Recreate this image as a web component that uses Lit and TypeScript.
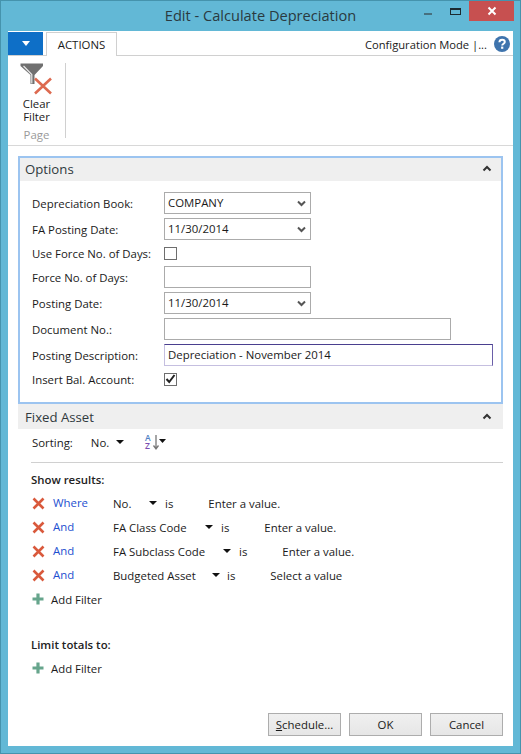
import { LitElement, html, css } from "lit";
import { customElement } from "lit/decorators.js";

const chevron = html`<svg class="chev" width="9" height="7" viewBox="0 0 9 7"><path d="M1 1.5 4.5 5 8 1.5" fill="none" stroke="#555" stroke-width="2"/></svg>`;
const up = html`<svg width="10" height="7" viewBox="0 0 10 7"><path d="M1.5 5.5 5 2 8.5 5.5" fill="none" stroke="#333" stroke-width="2"/></svg>`;
const tri = html`<span class="tri"></span>`;
const cross = html`<svg class="x" width="13" height="13" viewBox="0 0 13 13"><path d="M1.5 1.5 11.5 11.5M11.5 1.5 1.5 11.5" stroke="#D9593C" stroke-width="2.6"/></svg>`;
const plus = html`<svg class="plus" width="12" height="12" viewBox="0 0 12 12"><path d="M6 .5V11.5M.5 6H11.5" stroke="#66A58C" stroke-width="3.2"/></svg>`;

@customElement("app-root")
export class AppRoot extends LitElement {
  static styles = css`
    :host { display: block; width: 521px; height: 754px; font-family: "Open Sans", "Noto Sans", sans-serif; font-size: 11.4px; color: #1a1a1a; }
    * { box-sizing: border-box; }
    .win { width: 521px; height: 754px; background: #62b8d6; border: 1px solid #4593ad; display: flex; flex-direction: column; padding: 0 7px 7px 7px; }
    .titlebar { height: 30px; flex: none; position: relative; display: flex; align-items: center; justify-content: center; font-size: 14.6px; color: #2a3a40; padding-bottom: 3px; }
    .wc { position: absolute; top: 0; right: -1px; display: flex; align-items: flex-start; }
    .min { width: 8px; height: 2px; background: #47707f; margin: 12px 18px 0 0; }
    .max { width: 11px; height: 7px; border: 1px solid #1c2a30; border-top-width: 2px; margin: 7px 8px 0 0; }
    .close { width: 45px; height: 20px; background: #c75050; display: flex; align-items: center; justify-content: center; }
    .client { flex: 1; background: #fff; display: flex; flex-direction: column; min-height: 0; }
    .tabs { height: 25px; flex: none; display: flex; align-items: stretch; border-bottom: 1px solid #d0d0d0; padding-top: 1px; }
    .file { width: 35px; height: 23px; background: #0e6fc7; display: flex; align-items: center; justify-content: center; }
    .file i { border: 4px solid transparent; border-top: 5px solid #fff; border-bottom: 0; width: 0; height: 0; display: block; }
    .tab { width: 71px; margin-left: 3px; border: 1px solid #d0d0d0; border-bottom: 0; background: #fff; height: 24px; display: flex; align-items: center; justify-content: center; font-size: 11.4px; }
    .cfg { margin-left: auto; display: flex; align-items: center; gap: 7px; padding: 1px 3px 0 0; font-size: 11.2px; }
    .ribbon { height: 90px; flex: none; border-bottom: 1px solid #d8d8d8; padding: 7px 0 0 1px; display: flex; }
    .group { width: 57px; height: 75px; border-right: 1px solid #d0d0d0; display: flex; flex-direction: column; align-items: center; padding-right: 1px; }
    .group svg { flex: none; }
    .big { line-height: 13px; text-align: center; margin-top: 2px; width: 56px; }
    .pg { color: #9a9a9a; margin-top: 4px; line-height: 16px; }
    .body { flex: 1; padding: 10px 10px 0 10px; display: flex; flex-direction: column; min-height: 0; }
    .opts { height: 248px; border: 2px solid #9cc4f0; flex: none; width: 485px; }
    .sechead { height: 23px; background: #efefef; display: flex; align-items: center; justify-content: space-between; padding: 0 9px 2px 5px; font-size: 13.2px; color: #30393d; }
    .form { padding: 11px 0 0 12px; display: grid; grid-template-columns: 132px 1fr; row-gap: 4px; align-items: center; }
    .field { height: 22px; border: 1px solid #ababab; width: 147px; display: flex; align-items: center; justify-content: space-between; padding: 0 3px 2px 3px; }
    .field .chev { margin-top: 2px; margin-right: 1px; }
    .w287 { width: 287px; }
    .w329 { width: 329px; border: 1px solid #c5bfe0; border-top-color: #4a3f8f; border-right-color: #6a5fa8; }
    .ck { width: 13px; height: 13px; border: 1px solid #6e6e6e; display: flex; align-items: center; justify-content: center; }
    .ckrow { height: 18px; display: flex; align-items: center; }
    .fa { width: 485px; flex: 1; display: flex; flex-direction: column; }
    .fa .sechead { height: 25px; padding: 0 11px 0 7px; }
    .sort { display: flex; align-items: center; height: 33px; padding: 0 0 7px 14px; }
    .sort .no { margin-left: 18px; display: flex; align-items: center; gap: 7px; }
    .sort svg { margin-left: 21px; overflow: visible; }
    .hr { height: 1px; background: #d0d0d0; margin-left: 13px; }
    .bold { font-weight: 600; padding-left: 13px; line-height: 16px; color: #222; }
    .results { margin-top: 9px; margin-bottom: 3px; }
    .flt { height: 24px; display: flex; align-items: center; padding-left: 14px; position: relative; }
    .flt .x { flex: none; }
    .flt a { color: #1d4fd0; width: 60px; margin-left: 8px; margin-top: -2px; flex: none; }
    .flt .name { display: flex; align-items: center; flex: none; }
    .tri { display: inline-block; width: 0; height: 0; border: 4px solid transparent; border-top: 4px solid #111; border-bottom: 0; }
    .add { height: 24px; display: flex; align-items: center; gap: 7px; padding-left: 14px; }
    .limit { margin-top: 26px; }
    .add2 { margin-top: 3px; }
    .foot { margin-top: auto; display: flex; justify-content: flex-end; gap: 8px; padding: 0 0 10px 0; }
    .btn { width: 73px; height: 23px; border: 1px solid #adadad; background: linear-gradient(#f0f0f0, #e6e6e6); display: flex; align-items: center; justify-content: center; font-size: 11.4px; }
    u { text-decoration: underline; }
    .az { font-family: "Open Sans", sans-serif; font-size: 8.5px; font-weight: 600; }
  `;

  private row(label: string, ctl: unknown) {
    return html`<div>${label}</div>${ctl}`;
  }

  private filter(conj: string, name: string, nameW: number, isGap: number, val: string, valGap: number) {
    return html`<div class="flt">${cross}<a>${conj}</a>
      <span class="name" style="width:${nameW}px">${name}</span><span class="tri"></span>
      <span style="margin-left:${isGap}px">is</span><span style="margin-left:${valGap}px">${val}</span></div>`;
  }

  render() {
    return html`<div class="win">
      <div class="titlebar">Edit - Calculate Depreciation
        <div class="wc"><div class="min"></div><div class="max"></div>
          <div class="close"><svg width="10" height="10" viewBox="0 0 10 10"><path d="M1.5 1.5 8.5 8.5M8.5 1.5 1.5 8.5" stroke="#fff" stroke-width="2"/></svg></div></div>
      </div>
      <div class="client">
        <div class="tabs">
          <div class="file"><i></i></div><div class="tab">ACTIONS</div>
          <div class="cfg">Configuration Mode |...
            <svg width="16" height="16" viewBox="0 0 16 16"><circle cx="8" cy="8" r="8" fill="#3f74ad"/><path d="M5.4 6.2C5.5 4.6 6.6 3.7 8.1 3.7 9.7 3.7 10.8 4.6 10.8 6 10.8 7.7 8.2 7.8 8.2 9.6" fill="none" stroke="#fff" stroke-width="2"/><rect x="7.1" y="10.6" width="2.2" height="2.2" fill="#fff"/></svg>
          </div>
        </div>
        <div class="ribbon">
          <div class="group">
            <svg width="33" height="32" viewBox="0 0 33 32">
              <path d="M0.5 0.5H23V3L14.5 12V21L10.5 21V12L.5 3Z" fill="#707070"/>
              <path d="M3.5 3 11.8 11.5V20.5" fill="none" stroke="#e8e8e8" stroke-width="1.2"/>
              <path d="M15 15.5 31 30.5M31 15.5 15 30.5" stroke="#dd6a50" stroke-width="2.6"/>
            </svg>
            <div class="big">Clear<br />Filter</div>
            <div class="pg">Page</div>
          </div>
        </div>
        <div class="body">
          <div class="opts">
            <div class="sechead"><span>Options</span>${up}</div>
            <div class="form">
              ${this.row("Depreciation Book:", html`<div class="field">COMPANY${chevron}</div>`)}
              ${this.row("FA Posting Date:", html`<div class="field">11/30/2014${chevron}</div>`)}
              ${this.row("Use Force No. of Days:", html`<div class="ckrow"><div class="ck"></div></div>`)}
              ${this.row("Force No. of Days:", html`<div class="field"></div>`)}
              ${this.row("Posting Date:", html`<div class="field">11/30/2014${chevron}</div>`)}
              ${this.row("Document No.:", html`<div class="field w287"></div>`)}
              ${this.row("Posting Description:", html`<div class="field w329">Depreciation - November 2014</div>`)}
              ${this.row("Insert Bal. Account:", html`<div class="ckrow"><div class="ck"><svg width="11" height="10" viewBox="0 0 11 10"><path d="M1.5 5 4.2 8 9.5 1" fill="none" stroke="#222" stroke-width="2"/></svg></div></div>`)}
            </div>
          </div>
          <div class="fa">
            <div class="sechead"><span>Fixed Asset</span>${up}</div>
            <div class="sort"><span>Sorting:</span>
              <span class="no">No. ${tri}</span>
              <svg width="22" height="16" viewBox="0 0 22 16">
                <text class="az" x="0" y="7" fill="#4f7fc4">A</text>
                <text class="az" x="0" y="15" fill="#7a4fb0">Z</text>
                <path d="M11 1V14M8.5 11.5 11 15 13.5 11.5" fill="none" stroke="#777" stroke-width="1.3"/><path d="M14 5H21L17.5 9Z" fill="#111"/>
              </svg>
            </div>
            <div class="hr"></div>
            <div class="bold results">Show results:</div>
            ${this.filter("Where", "No.", 36, 8, "Enter a value.", 35)}
            ${this.filter("And", "FA Class Code", 92, 8, "Enter a value.", 35)}
            ${this.filter("And", "FA Subclass Code", 110, 8, "Enter a value.", 35)}
            ${this.filter("And", "Budgeted Asset", 99, 7, "Select a value", 35)}
            <div class="add">${plus}<span>Add Filter</span></div>
            <div class="bold limit">Limit totals to:</div>
            <div class="add add2">${plus}<span>Add Filter</span></div>
            <div class="foot">
              <div class="btn"><span><u>S</u>chedule...</span></div>
              <div class="btn">OK</div>
              <div class="btn">Cancel</div>
            </div>
          </div>
        </div>
      </div>
    </div>`;
  }
}
